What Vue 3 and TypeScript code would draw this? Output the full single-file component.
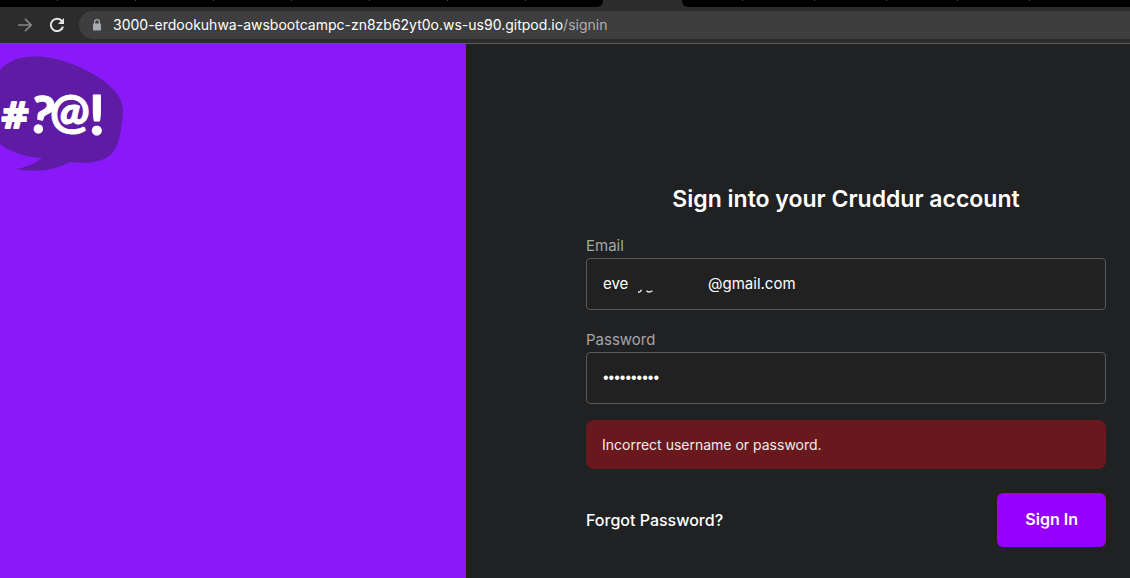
<script setup lang="ts">
import { ref } from 'vue'

const host = '3000-erdookuhwa-awsbootcampc-zn8zb62yt0o.ws-us90.gitpod.io'
const path = '/signin'
const emailStart = ref('eve')
const emailEnd = ref('@gmail.com')
const password = ref('cruddur123')
const error = ref('Incorrect username or password.')
const leftTabs = [0, 1, 2, 3, 4, 5, 6]
const rightTabs = [0, 1, 2, 3, 4]
</script>

<template>
  <div class="window">
    <header class="chrome">
      <div class="tabs">
        <div class="strip left"><i v-for="t in leftTabs" :key="t" class="tick"></i></div>
        <div class="strip right"><i v-for="t in rightTabs" :key="t" class="tick"></i></div>
      </div>
      <div class="toolbar">
        <button class="nav" type="button" aria-label="Forward">
          <svg width="16" height="16" viewBox="0 0 16 16" fill="none" stroke="#858585" stroke-width="1.7">
            <path d="M1 8h13M8 1.8 14.2 8 8 14.2" />
          </svg>
        </button>
        <button class="nav" type="button" aria-label="Reload">
          <svg width="16" height="16" viewBox="0 0 16 16" fill="none" stroke="#e4e4e4" stroke-width="2">
            <path d="M13 4.1A6.2 6.2 0 1 0 14 9.6" />
            <path d="M15 1v6H9z" fill="#e4e4e4" stroke="none" />
          </svg>
        </button>
        <div class="address">
          <svg class="lock" width="10" height="12" viewBox="0 0 10 12">
            <path d="M2.6 5V3.1a2.4 2.4 0 0 1 4.8 0V5" fill="none" stroke="#a9adb3" stroke-width="1.2" />
            <rect x="1" y="4.4" width="8" height="7" rx="1" fill="#a9adb3" />
          </svg>
          <span class="url">{{ host }}<span class="path">{{ path }}</span></span>
        </div>
      </div>
    </header>

    <main class="page">
      <aside class="brand">
        <svg class="logo" width="126" height="118" viewBox="0 0 126 118" role="img" aria-label="Cruddur">
          <path
            d="M0 14C9 3 25-1 45 1C69 4 101 19 114 34C123 44 124 53 122 65C120 83 117 96 106 102C98 106 88 108 70 106C55 114 37 117 16 113C27 111 36 107 42 102C24 101 8 95 0 88Z"
            fill="#5e1ca4"
          />
          <g class="mark" fill="#fff" stroke="#fff" stroke-linejoin="round">
            <text class="hash" x="0" y="72" font-size="36" stroke-width="2">#</text>
            <text x="30" y="77" font-size="51" stroke-width="1" transform="rotate(10 42 60)">?</text>
            <text x="50" y="72" font-size="47" stroke-width="1">@</text>
            <text x="89" y="79" font-size="55" stroke-width="1">!</text>
          </g>
        </svg>
      </aside>

      <section class="content">
        <form class="signin" @submit.prevent>
          <h1>Sign into your Cruddur account</h1>
          <div class="field">
            <label for="email">Email</label>
            <div class="control">
              <input id="email" v-model="emailStart" class="start" type="text" />
              <svg class="redacted" width="18" height="6" viewBox="0 0 18 6" fill="none" stroke="#e4e4e4" stroke-width="1.4">
                <path d="M1 4.2Q3.5 4.6 4.5 1.8M9.5 2.8Q12 5.4 15.5 2.8" />
              </svg>
              <input v-model="emailEnd" class="end" type="text" aria-label="Email domain" />
            </div>
          </div>
          <div class="field">
            <label for="password">Password</label>
            <div class="control">
              <input id="password" v-model="password" class="secret" type="password" />
            </div>
          </div>
          <div class="errors" role="alert">{{ error }}</div>
          <div class="submit">
            <a href="#forgot">Forgot Password?</a>
            <button type="submit">Sign In</button>
          </div>
        </form>
      </section>
    </main>
  </div>
</template>

<style>
body {
  margin: 0;
  background: #202123;
}
</style>

<style scoped>
.window {
  display: flex;
  flex-direction: column;
  min-height: 100vh;
  overflow: hidden;
  font-family: Inter, "Liberation Sans", sans-serif;
  color: #fff;
}
.chrome {
  background: #2c2c2c;
  border-bottom: 1px solid #5a5b5d;
}
.tabs {
  display: flex;
  gap: 79px;
  height: 7px;
}
.strip {
  display: flex;
  box-sizing: border-box;
  justify-content: space-between;
  background: #000;
}
.left {
  flex: 0 1 603px;
  padding: 0 77px 0 57px;
  border-bottom-right-radius: 6px;
}
.right {
  flex: 1;
  padding: 0 100px 0 60px;
  border-bottom-left-radius: 6px;
}
.tick {
  width: 1px;
  height: 1px;
  background: #4a4a4a;
}
.toolbar {
  display: flex;
  align-items: center;
  gap: 16px;
  padding: 4px 0 4px 17px;
}
.nav {
  display: flex;
  padding: 0;
  border: 0;
  background: none;
}
.address {
  flex: 1;
  display: flex;
  align-items: center;
  gap: 11px;
  height: 28px;
  margin-left: -2px;
  padding-left: 13px;
  border-radius: 14px 0 0 14px;
  background: #3e3e3e;
}
.url {
  font-size: 14px;
  line-height: 16px;
  padding-bottom: 1px;
  white-space: nowrap;
}
.path {
  color: #b0b0b0;
}
.page {
  flex: 1;
  display: flex;
}
.brand {
  width: 466px;
  flex-shrink: 0;
  background: #8919f8;
}
.logo {
  display: block;
  margin-top: 12px;
}
.mark {
  font-family: Lato, sans-serif;
  font-weight: 900;
}
.hash {
  font-family: "DejaVu Sans", sans-serif;
  font-weight: 700;
}
.content {
  flex: 1;
  padding: 138px 24px 0 120px;
  background: #202123;
}
h1 {
  margin: 0 0 16px;
  font-size: 23px;
  line-height: 34px;
  font-weight: 600;
  text-align: center;
}
.field {
  margin-bottom: 16px;
}
label {
  display: block;
  padding-top: 2px;
  font-size: 15px;
  line-height: 24px;
  color: #a6a6a7;
}
.control {
  display: flex;
  align-items: center;
  box-sizing: border-box;
  height: 52px;
  padding: 0 16px 1px;
  border: 1px solid #58595a;
  border-radius: 4px;
  background: #212121;
}
input {
  min-width: 0;
  padding: 0;
  border: 0;
  outline: 0;
  background: none;
  color: #fff;
  font: 15px/20px Inter, sans-serif;
}
.start {
  width: 34px;
}
.redacted {
  align-self: flex-end;
  margin: 0 53px 14px 0;
}
.end,
.secret {
  flex: 1;
}
.secret {
  font: 16px/20px "Liberation Sans", sans-serif;
}
.errors {
  padding: 14px 16px;
  border-radius: 8px;
  background: #69191e;
  font-size: 14px;
  line-height: 21px;
  color: #ececec;
}
.submit {
  display: flex;
  align-items: center;
  justify-content: space-between;
  margin-top: 24px;
}
.submit a {
  color: #fff;
  font-size: 16px;
  font-weight: 500;
  text-decoration: none;
}
.submit button {
  padding: 16px 28px 18px;
  border: 0;
  border-radius: 6px;
  background: #9500ff;
  color: #fff;
  font: 600 16px/20px Inter, sans-serif;
}
</style>
